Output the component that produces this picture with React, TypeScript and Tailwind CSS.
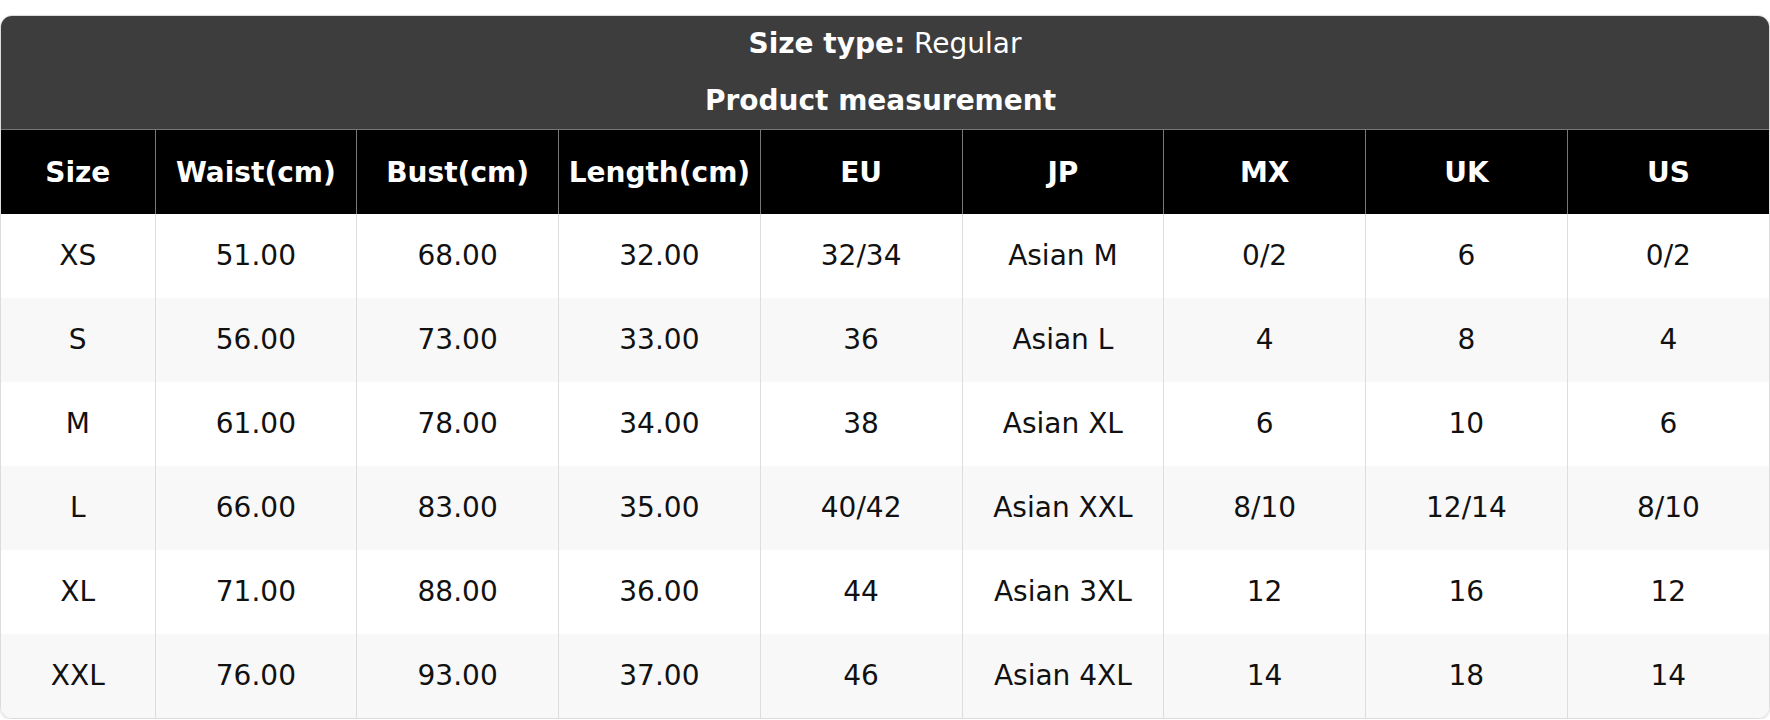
const headers = ['Size', 'Waist(cm)', 'Bust(cm)', 'Length(cm)', 'EU', 'JP', 'MX', 'UK', 'US']

const rows = [
  ['XS', '51.00', '68.00', '32.00', '32/34', 'Asian M', '0/2', '6', '0/2'],
  ['S', '56.00', '73.00', '33.00', '36', 'Asian L', '4', '8', '4'],
  ['M', '61.00', '78.00', '34.00', '38', 'Asian XL', '6', '10', '6'],
  ['L', '66.00', '83.00', '35.00', '40/42', 'Asian XXL', '8/10', '12/14', '8/10'],
  ['XL', '71.00', '88.00', '36.00', '44', 'Asian 3XL', '12', '16', '12'],
  ['XXL', '76.00', '93.00', '37.00', '46', 'Asian 4XL', '14', '18', '14'],
]

export default function App() {
  return (
    <div className="bg-white pt-[15px] font-['DejaVu_Sans',sans-serif]">
      <div className="rounded-xl overflow-hidden border border-[#dcdcdc] shadow-sm">
        {/* Title block */}
        <div className="bg-[#3d3d3d] text-white text-[28px] text-center">
          <div className="h-14 leading-[56px]">
            <span className="font-bold">Size type:</span> Regular
          </div>
          <div className="h-[57px] leading-[58px] pr-[9px] font-bold">Product measurement</div>
        </div>

        <table className="w-full table-fixed border-collapse text-[28px]">
          <colgroup>
            <col className="w-[154px]" />
            {headers.slice(1).map((h) => (
              <col key={h} />
            ))}
          </colgroup>
          <thead>
            <tr className="bg-black text-white h-[84px] border-t border-[#777]">
              {headers.map((h, i) => (
                <th
                  key={h}
                  className={`pt-[3px] font-bold text-center whitespace-nowrap ${i > 0 ? 'border-l border-[#777]' : ''}`}
                >
                  {h}
                </th>
              ))}
            </tr>
          </thead>
          <tbody>
            {rows.map((r, ri) => (
              <tr key={r[0]} className={`h-[84px] ${ri % 2 === 1 ? 'bg-[#f8f8f8]' : 'bg-white'}`}>
                {r.map((c, ci) => (
                  <td
                    key={ci}
                    className={`text-center text-[#111] ${ci > 0 ? 'border-l border-[#dddddd]' : ''}`}
                  >
                    {c}
                  </td>
                ))}
              </tr>
            ))}
          </tbody>
        </table>
      </div>
    </div>
  )
}
